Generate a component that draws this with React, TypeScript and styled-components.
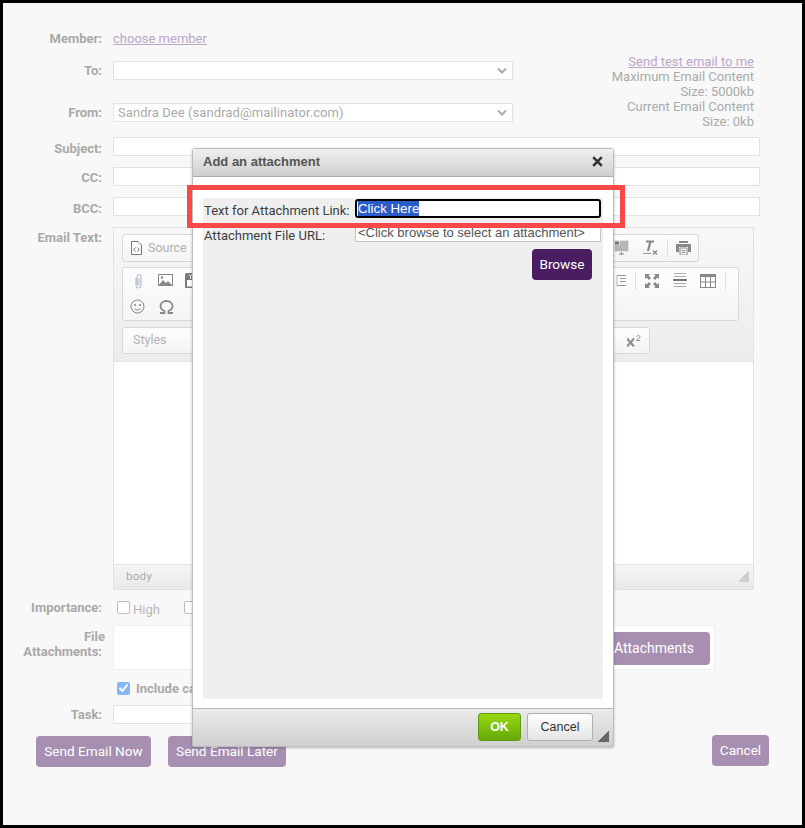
import * as React from 'react'
import styled, { createGlobalStyle } from 'styled-components'

const GlobalStyle = createGlobalStyle`
  html, body {
    margin: 0;
    padding: 0;
    background: #000;
  }
  * {
    box-sizing: border-box;
  }
`

const Frame = styled.div`
  position: relative;
  width: 805px;
  height: 828px;
  border: 3px solid #000;
  background: #f8f8f8;
  padding-top: 26px;
  font-family: Roboto, sans-serif;
  font-size: 13px;
  color: #aaa;
  overflow: hidden;
`

const Top = styled.div`
  display: flex;
  align-items: flex-start;
`

const TopFields = styled.div`
  width: 510px;
`

const Note = styled.div`
  width: 241px;
  margin-top: 25px;
  margin-bottom: -30px;
  text-align: right;
  line-height: 15px;
  padding-left: 85px;
`

const Row = styled.div<{ $top?: number; $height?: number }>`
  display: grid;
  grid-template-columns: 99px 1fr;
  column-gap: 11px;
  margin-top: ${(p) => p.$top ?? 0}px;
  height: ${(p) => p.$height ?? 19}px;
`

const Label = styled.label<{ $drop?: number }>`
  display: block;
  font-weight: 700;
  text-align: right;
  line-height: 19px;
  color: #a9a9a9;
  padding-top: ${(p) => p.$drop ?? 0}px;
`

const TopLabel = styled(Label)`
  line-height: 15px;
  padding-top: 4px;
`

const FileWord = styled.span`
  display: block;
  margin-right: -3px;
`

const Link = styled.a`
  color: #bba6c8;
  text-decoration: underline;
`

const MemberLink = styled(Link)`
  line-height: 19px;
`

const Field = styled.div`
  height: 19px;
  background: #fff;
  border: 1px solid #e3e3e3;
  padding-left: 4px;
  line-height: 17px;
  color: #aaa;
`

const SelectBox = styled(Field)`
  display: flex;
  justify-content: space-between;
  align-items: center;
  padding-right: 5px;
`

const SelectText = styled.span`
  letter-spacing: 0.07px;
`

const WideField = styled(Field)`
  width: 647px;
`

const TaskField = styled(Field)`
  width: 400px;
`

const Chevron = () => (
  <svg width="10" height="7" viewBox="0 0 10 7">
    <path d="M1 1.500 L5 5.500 L9 1.500" fill="none" stroke="#aaa" strokeWidth="2" />
  </svg>
)

const Editor = styled.div`
  width: 641px;
  height: 363px;
  border: 1px solid #e2e2e2;
  display: flex;
  flex-direction: column;
`

const ToolArea = styled.div`
  height: 134px;
  padding: 6px 8px 0;
  background: linear-gradient(#f8f8f8, #ececec);
  border-bottom: 1px solid #e4e4e4;
  display: flex;
  flex-direction: column;
  gap: 5px;
`

const ToolGroup = styled.div<{ $width: number; $height: number }>`
  width: ${(p) => p.$width}px;
  height: ${(p) => p.$height}px;
  flex: none;
  background: linear-gradient(#fdfdfd, #f4f4f4);
  border: 1px solid #d8d8d8;
  border-radius: 3px;
  padding: 0 7px;
  display: flex;
  flex-direction: column;
  gap: 1px;
`

const LastGroup = styled(ToolGroup)`
  margin-top: 1px;
`

const ToolRow = styled.div`
  height: 25px;
  flex: none;
  display: flex;
  align-items: center;
  justify-content: space-between;
`

const ToolSide = styled.div`
  display: flex;
  align-items: center;
  gap: 14px;
`

const RightTools = styled.div`
  display: flex;
  align-items: center;
  gap: 9px;
`

const InsetTools = styled(RightTools)`
  margin-right: 5px;
`

const SourceTools = styled.div`
  display: flex;
  align-items: center;
  gap: 6px;
  margin-left: 1px;
`

const Sep = styled.span`
  width: 1px;
  height: 18px;
  background: #e0e0e0;
`

const PrintSep = styled(Sep)`
  margin-right: -1px;
`

const SourceText = styled.span`
  color: #b0b0b0;
  font-size: 12.5px;
`

const StylesText = styled.span`
  color: #b4b4b4;
  font-size: 12.5px;
  margin-left: 3px;
  padding-bottom: 2px;
`

const EditorBody = styled.div`
  flex: 1;
  background: #fff;
`

const StatusBar = styled.div`
  height: 25px;
  background: linear-gradient(#f5f5f5, #e9e9e9);
  border-top: 1px solid #e4e4e4;
  padding: 0 4px 2px 12px;
  font-size: 11.5px;
  letter-spacing: 0.3px;
  color: #aaa;
  display: flex;
  align-items: center;
  justify-content: space-between;
`

const Grip = styled.div<{ $color: string }>`
  width: 11px;
  height: 11px;
  background: linear-gradient(135deg, transparent 50%, ${(p) => p.$color} 50%);
`

const Check = styled.span`
  display: inline-block;
  width: 13px;
  height: 13px;
  border: 1px solid #bdbdbd;
  border-radius: 2px;
  background: #fff;
  flex: none;
`

const Ticked = styled.span`
  width: 13px;
  height: 13px;
  border-radius: 2px;
  background: #85b7f5;
  flex: none;
  display: flex;
  align-items: center;
  justify-content: center;
`

const Options = styled.div`
  display: flex;
  align-items: center;
  gap: 24px;
  padding-left: 4px;
`

const Option = styled.span`
  display: flex;
  align-items: center;
  gap: 3px;
  line-height: 15px;
  color: #b8b8b8;
`

const OptionText = styled.span`
  padding-top: 3px;
`

const IncludeRow = styled.div`
  margin: 11px 0 0 114px;
  display: flex;
  align-items: center;
  gap: 6px;
  height: 14px;
  font-weight: 700;
  color: #aaa;
`

const FileBox = styled.div`
  width: 602px;
  height: 45px;
  background: #fff;
  border: 1px solid #f0f0f0;
  padding: 6px 4px 0 0;
  display: flex;
  justify-content: flex-end;
`

const PurpleButton = styled.button<{ $width: number }>`
  width: ${(p) => p.$width}px;
  height: 31px;
  background: #a78fb1;
  color: #fff;
  border: 0;
  border-radius: 4px;
  font-family: Roboto, sans-serif;
  font-size: 13.6px;
  padding: 0 0 2px;
`

const AttachButton = styled(PurpleButton)`
  height: 33px;
  font-size: 14px;
  text-align: right;
  padding-right: 16px;
`

const Actions = styled.div`
  margin: 12px 0 0 33px;
  display: flex;
  width: 733px;
  gap: 17px;
`

const CancelButton = styled(PurpleButton)`
  margin-left: auto;
  margin-top: -1px;
`

const Highlight = styled.div`
  position: absolute;
  left: 184px;
  top: 182px;
  width: 438px;
  height: 43px;
  border: 5px solid #f94848;
  z-index: 3;
`

const Dialog = styled.div`
  position: absolute;
  left: 189px;
  top: 145px;
  width: 422px;
  height: 599px;
  background: #fff;
  border: 1px solid #bcbcbc;
  border-radius: 3px 3px 2px 2px;
  box-shadow: 0 1px 3px rgba(0, 0, 0, 0.25);
  display: flex;
  flex-direction: column;
  z-index: 2;
`

const DialogTitle = styled.div`
  height: 28px;
  background: linear-gradient(#f0f0f0, #cfcfcf);
  border-bottom: 1px solid #aaa;
  padding: 0 10px 2px 10px;
  display: flex;
  align-items: center;
  justify-content: space-between;
  font-family: 'Liberation Sans', Arial, sans-serif;
  font-size: 13px;
  font-weight: 700;
  color: #555;
`

const DialogBody = styled.div`
  flex: 1;
  padding: 21px 10px 9px;
`

const DialogPane = styled.div`
  height: 100%;
  background: #efefef;
  padding: 1px 2px 0 1px;
  color: #333;
  display: flex;
  flex-direction: column;
`

const DialogRow = styled.div`
  display: grid;
  grid-template-columns: 151px 246px;
  height: 19px;
`

const SecondRow = styled(DialogRow)`
  margin-top: 6px;
`

const DialogLabel = styled.span`
  font-size: 13px;
  line-height: 23px;
  color: #3d3d3d;
`

const FocusInput = styled.div`
  height: 19px;
  border: 2px solid #000;
  border-radius: 3px;
  background: #fff;
  padding-left: 1px;
  font-family: 'Liberation Sans', Arial, sans-serif;
  font-size: 13.3px;
  line-height: 15px;
`

const Selected = styled.span`
  background: #2a5bc9;
  color: #fff;
`

const UrlInput = styled.div`
  height: 18px;
  border: 1px solid #c4c4c4;
  background: #fff;
  padding-left: 2px;
  font-family: 'Liberation Sans', Arial, sans-serif;
  font-size: 13px;
  line-height: 16px;
  color: #555;
  white-space: nowrap;
  overflow: hidden;
`

const BrowseButton = styled.button`
  align-self: flex-end;
  margin: 6px 9px 0 0;
  width: 60px;
  height: 31px;
  background: #4a1d60;
  color: #fff;
  border: 0;
  border-radius: 4px;
  font-family: Roboto, sans-serif;
  font-size: 13.6px;
  padding: 0 0 2px;
`

const DialogFooter = styled.div`
  height: 38px;
  border-top: 1px solid #b8b8b8;
  background: linear-gradient(#ebebeb, #cfcfcf);
  padding: 4px 4px 0 0;
  display: flex;
  justify-content: flex-end;
  gap: 6px;
  font-family: 'Liberation Sans', Arial, sans-serif;
  font-size: 12.5px;
  font-weight: 700;
`

const OkButton = styled.button`
  width: 43px;
  height: 28px;
  padding: 0;
  border: 1px solid #5f9a0f;
  border-radius: 3px;
  background: linear-gradient(#97d80f, #66a90a);
  color: #fff;
  font: inherit;
`

const DialogCancel = styled.button`
  width: 66px;
  height: 28px;
  padding: 0;
  border: 1px solid #b0b0b0;
  border-radius: 3px;
  background: linear-gradient(#fff, #e4e4e4);
  color: #333;
  font: inherit;
  font-weight: 400;
`

const FooterGrip = styled(Grip)`
  align-self: flex-end;
  margin: 0 0 4px -1px;
`

const ic = '#8f8f8f'

const SourceIcon = () => (
  <svg width="11" height="14" viewBox="0 0 11 14">
    <path d="M.5.5h6.500l3.500 3.500v9.500h-10z" fill="#fff" stroke="#777" />
    <path d="M4.500 6.500 2.800 8.500l1.700 2M6.500 6.500l1.700 2-1.700 2" fill="none" stroke="#666" />
  </svg>
)

const ClipIcon = () => (
  <svg width="11" height="16" viewBox="0 0 11 16">
    <path d="M3 5v7.500a2.500 2.500 0 0 0 5 0V3.500a2 2 0 0 0-4 0V11a.8.8 0 0 0 2 0V5" fill="none" stroke="#a3b1c4" />
  </svg>
)

const ClipSlot = styled.span`
  display: flex;
  margin-left: 3px;
`

const ImageIcon = () => (
  <svg width="15" height="13" viewBox="0 0 15 13">
    <rect x=".5" y=".5" width="14" height="11" fill="#fff" stroke="#888" />
    <path d="M1 11l4-5 3 3 2-2 4 4z" fill="#888" />
    <circle cx="4" cy="3.500" r="1.200" fill="#888" />
  </svg>
)

const VideoIcon = () => (
  <svg width="14" height="15" viewBox="0 0 14 15">
    <rect width="14" height="15" rx="1.500" fill="#777" />
    <rect x="2" y="7" width="10" height="6.500" fill="#fff" />
    <path d="M4 1.500l1.500 2 1.500-2M5.500 3.500v2.500" stroke="#fff" fill="none" />
  </svg>
)

const VideoSlot = styled.span`
  display: flex;
  margin-left: -2px;
`

const SmileyIcon = () => (
  <svg width="15" height="15" viewBox="0 0 15 15">
    <circle cx="7.500" cy="7.500" r="6.500" fill="none" stroke="#888" />
    <circle cx="5" cy="6" r="1" fill="#888" />
    <circle cx="10" cy="6" r="1" fill="#888" />
    <path d="M4.500 9.500c1.500 2 4.500 2 6 0" fill="none" stroke="#888" />
  </svg>
)

const OmegaIcon = () => (
  <svg width="15" height="14" viewBox="0 0 15 14">
    <path d="M1 13h4.500v-2C3 10 1.500 8 1.500 6c0-3 2.600-5 6-5s6 2 6 5c0 2-1.500 4-4 5v2H14" fill="none" stroke="#888" strokeWidth="1.800" />
  </svg>
)

const BlockIcon = () => (
  <svg width="15" height="16" viewBox="0 0 15 16">
    <rect width="15" height="12" fill="#e4e4e4" />
    <path d="M1 1.500h4v3H1z" fill="#777" />
    <path d="M6 2h8M6 4h8M1 6h13M1 8h13M1 10h13M5 14h5M7.500 12v3" stroke="#888" fill="none" />
  </svg>
)

const BlockSlot = styled.span`
  display: flex;
  margin-right: 5px;
`

const ClearIcon = () => (
  <svg width="15" height="15" viewBox="0 0 15 15">
    <path d="M3 1.500h8M7.500 1.500 5 11" stroke="#888" strokeWidth="2.200" fill="none" />
    <path d="M0 13.500h8" stroke="#999" />
    <path d="M10 10.500l4 4M14 10.500l-4 4" stroke="#888" strokeWidth="1.300" />
  </svg>
)

const PrintIcon = () => (
  <svg width="15" height="14" viewBox="0 0 15 14">
    <path d="M3 0h9v2H3zM0 3h15v8h-3V6H3v5H0z" fill="#888" />
    <path d="M4 7h7v7H4z" fill="#fff" stroke="#888" />
    <path d="M5.500 9.500h4M5.500 11.500h4" stroke="#888" />
  </svg>
)

const IndentIcon = () => (
  <svg width="13" height="12" viewBox="0 0 13 12">
    <path d="M4 .5h9M7 3.500h6M7 6.500h6M4 10.500h9" stroke="#999" />
    <path d="M4 .5v11" stroke="#bbb" />
  </svg>
)

const MaxIcon = () => (
  <svg width="14" height="14" viewBox="0 0 14 14">
    <path d="M0 0h5L3.500 1.500 6 4 4 6 1.500 3.500 0 5zM14 0v5l-1.500-1.500L10 6 8 4l2.500-2.500L9 0zM0 14V9l1.500 1.500L4 8l2 2-2.500 2.500L5 14zM14 14H9l1.500-1.500L8 10l2-2 2.500 2.500L14 9z" fill="#888" />
  </svg>
)

const RuleIcon = () => (
  <svg width="14" height="15" viewBox="0 0 14 15">
    <path d="M1 .5h12M1 3.500h12M1 10.500h12M1 13.500h12" stroke="#aaa" />
    <path d="M0 7h14" stroke="#777" strokeWidth="2" />
  </svg>
)

const RuleSlot = styled.span`
  display: flex;
  margin: 0 4px 0 5px;
`

const TableIcon = () => (
  <svg width="16" height="14" viewBox="0 0 16 14">
    <rect x=".5" y=".5" width="15" height="13" fill="#fff" stroke="#888" />
    <rect width="16" height="3" fill="#888" />
    <path d="M5.500 3v10M10.500 3v10M1 8h14" stroke="#888" />
  </svg>
)

const SuperIcon = () => (
  <svg width="15" height="12" viewBox="0 0 15 12">
    <path d="M0 3.500l7 8M7 3.500l-7 8" stroke={ic} strokeWidth="2.200" />
    <path d="M9.500 1.500c1-1.500 4-1 3.300.7C12.300 3.500 10 4 9.500 5.500h3.600" fill="none" stroke={ic} />
  </svg>
)

const CloseIcon = () => (
  <svg width="11" height="11" viewBox="0 0 11 11">
    <path d="M1.200 1.200l8.600 8.600M9.800 1.200l-8.600 8.600" stroke="#333" strokeWidth="2.600" />
  </svg>
)

const TickIcon = () => (
  <svg width="11" height="10" viewBox="0 0 11 10">
    <path d="M1.500 5l3 3 5-6.500" fill="none" stroke="#fff" strokeWidth="2" />
  </svg>
)

const App = () => (
  <Frame>
    <GlobalStyle />
    <Top>
      <TopFields>
        <Row>
          <Label>Member:</Label>
          <div><MemberLink>choose member</MemberLink></div>
        </Row>
        <Row $top={13}>
          <Label>To:</Label>
          <SelectBox><span /><Chevron /></SelectBox>
        </Row>
        <Row $top={23}>
          <Label>From:</Label>
          <SelectBox>
            <SelectText>Sandra Dee (sandrad@mailinator.com)</SelectText>
            <Chevron />
          </SelectBox>
        </Row>
      </TopFields>
      <Note>
        <Link>Send test email to me</Link>
        <br />
        Maximum Email Content Size: 5000kb
        <br />
        Current Email Content Size: 0kb
      </Note>
    </Top>
    <Row $top={15}>
      <Label $drop={2}>Subject:</Label>
      <WideField />
    </Row>
    <Row $top={11}>
      <Label $drop={1}>CC:</Label>
      <WideField />
    </Row>
    <Row $top={11}>
      <Label $drop={2}>BCC:</Label>
      <WideField />
    </Row>
    <Row $top={11} $height={363}>
      <Label $drop={1}>Email Text:</Label>
      <Editor>
        <ToolArea>
          <ToolGroup $width={577} $height={28}>
            <ToolRow>
              <SourceTools>
                <SourceIcon />
                <SourceText>Source</SourceText>
              </SourceTools>
              <RightTools>
                <BlockSlot><BlockIcon /></BlockSlot>
                <ClearIcon />
                <PrintSep />
                <PrintIcon />
              </RightTools>
            </ToolRow>
          </ToolGroup>
          <ToolGroup $width={617} $height={54}>
            <ToolRow>
              <ToolSide>
                <ClipSlot><ClipIcon /></ClipSlot>
                <ImageIcon />
                <VideoSlot><VideoIcon /></VideoSlot>
              </ToolSide>
              <InsetTools>
                <IndentIcon />
                <Sep />
                <MaxIcon />
                <RuleSlot><RuleIcon /></RuleSlot>
                <TableIcon />
                <Sep />
              </InsetTools>
            </ToolRow>
            <ToolRow>
              <ToolSide>
                <SmileyIcon />
                <OmegaIcon />
              </ToolSide>
            </ToolRow>
          </ToolGroup>
          <LastGroup $width={528} $height={27}>
            <ToolRow>
              <StylesText>Styles</StylesText>
              <SuperIcon />
            </ToolRow>
          </LastGroup>
        </ToolArea>
        <EditorBody />
        <StatusBar>
          <span>body</span>
          <Grip $color="#cfcfcf" />
        </StatusBar>
      </Editor>
    </Row>
    <Row $top={8}>
      <Label>Importance:</Label>
      <Options>
        <Option><Check /><OptionText>High</OptionText></Option>
        <Option><Check /></Option>
      </Options>
    </Row>
    <Row $top={8} $height={45}>
      <TopLabel><FileWord>File</FileWord>Attachments:</TopLabel>
      <FileBox>
        <AttachButton $width={220}>Attachments</AttachButton>
      </FileBox>
    </Row>
    <IncludeRow>
      <Ticked><TickIcon /></Ticked>
      Include ca
    </IncludeRow>
    <Row $top={10}>
      <Label>Task:</Label>
      <TaskField />
    </Row>
    <Actions>
      <PurpleButton $width={115}>Send Email Now</PurpleButton>
      <PurpleButton $width={118}>Send Email Later</PurpleButton>
      <CancelButton $width={57}>Cancel</CancelButton>
    </Actions>

    <Dialog>
      <DialogTitle>
        Add an attachment
        <CloseIcon />
      </DialogTitle>
      <DialogBody>
        <DialogPane>
          <DialogRow>
            <DialogLabel>Text for Attachment Link:</DialogLabel>
            <FocusInput><Selected>Click Here</Selected></FocusInput>
          </DialogRow>
          <SecondRow>
            <DialogLabel>Attachment File URL:</DialogLabel>
            <UrlInput>&lt;Click browse to select an attachment&gt;</UrlInput>
          </SecondRow>
          <BrowseButton>Browse</BrowseButton>
        </DialogPane>
      </DialogBody>
      <DialogFooter>
        <OkButton>OK</OkButton>
        <DialogCancel>Cancel</DialogCancel>
        <FooterGrip $color="#666" />
      </DialogFooter>
    </Dialog>
    <Highlight />
  </Frame>
)

export default App
